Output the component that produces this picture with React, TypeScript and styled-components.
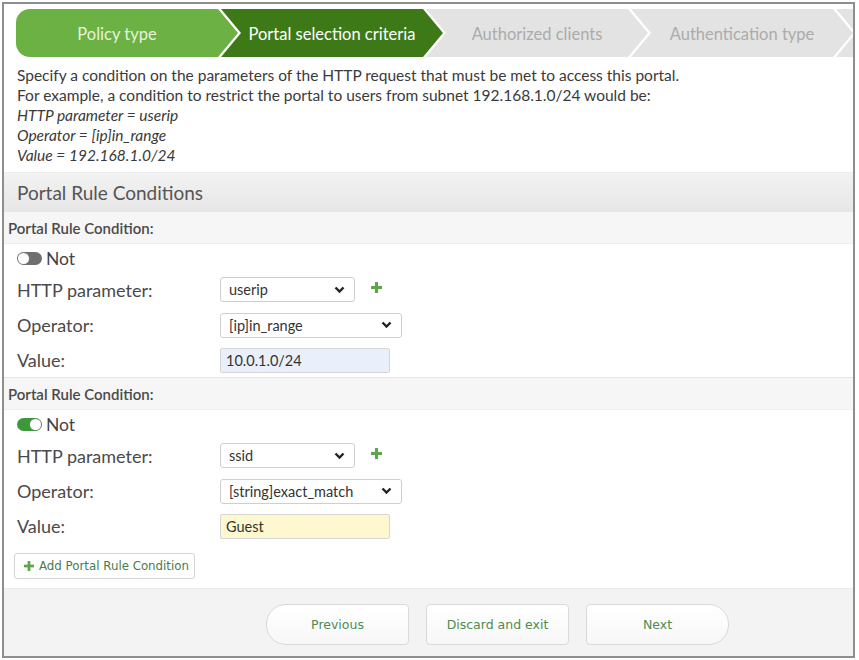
import React from "react";
import styled, { createGlobalStyle, css } from "styled-components";

const Global = createGlobalStyle`
  html, body { margin: 0; padding: 0; background: #ffffff; }
  body { font-family: Lato, "Open Sans", sans-serif; color: #333; }
  * { box-sizing: border-box; }
`;

const Frame = styled.div`
  margin: 2px 4px 0 2px;
  width: 853px;
  height: 656px;
  border: 2px solid #8e8e8e;
  display: flex;
  flex-direction: column;
  overflow: hidden;
  background: #fff;
`;

const Steps = styled.div`
  display: flex;
  padding: 5px 0 0 12px;
  height: 53px;
  overflow: hidden;
  flex-shrink: 0;
`;

type StepKind = "done" | "active" | "todo";

const Step = styled.div<{ $kind: StepKind; $first?: boolean }>`
  flex: 0 0 222px;
  height: 48px;
  display: flex;
  align-items: center;
  justify-content: center;
  font-size: 16.5px;
  padding-top: 1px;
  white-space: nowrap;
  padding-right: 20px;
  padding-left: ${(p) => (p.$first ? "0" : "20px")};
  margin-left: ${(p) => (p.$first ? "0" : "-17px")};
  clip-path: ${(p) =>
    p.$first
      ? "polygon(0 0, calc(100% - 20px) 0, 100% 50%, calc(100% - 20px) 100%, 0 100%)"
      : "polygon(0 0, calc(100% - 20px) 0, 100% 50%, calc(100% - 20px) 100%, 0 100%, 20px 50%)"};
  border-radius: ${(p) => (p.$first ? "14px 0 0 14px" : "0")};
  ${(p) =>
    p.$kind === "done" &&
    css`
      background: #6cb144;
      color: #e6f4da;
    `}
  ${(p) =>
    p.$kind === "active" &&
    css`
      background: #3d7a17;
      color: #ffffff;
    `}
  ${(p) =>
    p.$kind === "todo" &&
    css`
      background: #e3e3e3;
      color: #ababab;
    `}
`;

const Description = styled.div`
  padding: 8px 13px 0 13px;
  font-size: 15.5px;
  line-height: 20px;
  color: #3a3a3a;
  height: 115px;
  flex-shrink: 0;
  white-space: nowrap;
`;

const Italic = styled.div`
  font-style: italic;
`;

const SectionHeader = styled.div`
  height: 39px;
  display: flex;
  align-items: center;
  padding-left: 13px;
  font-size: 19px;
  color: #555;
  background: linear-gradient(#f2f2f2, #e7e7e7);
  border-top: 1px solid #ececec;
  flex-shrink: 0;
`;

const ConditionBand = styled.div`
  height: 33px;
  display: flex;
  align-items: center;
  padding-left: 4px;
  font-size: 15px;
  font-weight: 600;
  color: #4a4a4a;
  background: #f6f6f6;
  border-top: 1px solid #e6e6e6;
  border-bottom: 1px solid #eeeeee;
  flex-shrink: 0;
`;

const ToggleRow = styled.div`
  height: 28px;
  display: flex;
  align-items: center;
  gap: 4px;
  padding-left: 13px;
  font-size: 17.5px;
  color: #444;
`;

const Track = styled.span<{ $on?: boolean }>`
  position: relative;
  width: 25px;
  height: 13px;
  border-radius: 7px;
  background: ${(p) => (p.$on ? "#3a9a3a" : "#6f6f6f")};
  display: inline-block;
`;

const Knob = styled.span<{ $on?: boolean }>`
  position: absolute;
  top: 1px;
  left: ${(p) => (p.$on ? "13px" : "1px")};
  width: 11px;
  height: 11px;
  border-radius: 50%;
  background: #fff;
  box-shadow: 0 0 0 0.5px #888;
`;

const FieldRow = styled.div<{ $h?: number }>`
  height: ${(p) => p.$h ?? 35}px;
  display: grid;
  grid-template-columns: 203px max-content max-content;
  justify-content: start;
  align-items: center;
  padding-left: 13px;
`;

const Label = styled.span`
  font-size: 18px;
  color: #4a4a4a;
`;

const SelectBox = styled.div<{ $w: number }>`
  width: ${(p) => p.$w}px;
  height: 25px;
  border: 1px solid #cfcfcf;
  border-radius: 3px;
  background: #fff;
  display: flex;
  align-items: center;
  justify-content: space-between;
  padding: 0 9px 0 8px;
  font-size: 14.5px;
  color: #333;
`;

const InputBox = styled.div<{ $tone: "blue" | "yellow" }>`
  width: 170px;
  height: 25px;
  border: 1px solid #d6d6d6;
  border-radius: 2px;
  background: ${(p) => (p.$tone === "blue" ? "#e9f0fb" : "#fdf8cf")};
  display: flex;
  align-items: center;
  padding-left: 5px;
  font-size: 14.5px;
  color: #333;
`;

const PlusSlot = styled.span`
  margin-left: 16px;
  display: inline-flex;
  align-items: center;
  margin-top: -4px;
`;

const AddButton = styled.div`
  margin: 10px 0 0 10px;
  width: 181px;
  height: 26px;
  border: 1px solid #d4d4d4;
  border-radius: 3px;
  background: #fff;
  display: flex;
  align-items: center;
  gap: 5px;
  padding-left: 9px;
  font-family: "DejaVu Sans", Verdana, sans-serif;
  font-size: 11.8px;
  color: #4b7a4b;
  flex-shrink: 0;
  white-space: nowrap;
`;

const Footer = styled.div`
  margin-top: auto;
  height: 68px;
  background: #f3f3f3;
  border-top: 1px solid #e9e9e9;
  display: flex;
  align-items: flex-start;
  padding: 15px 0 0 262px;
  gap: 17px;
  flex-shrink: 0;
`;

const NavButton = styled.div<{ $shape: "left" | "mid" | "right" }>`
  width: 143px;
  height: 41px;
  border: 1px solid #d9d9d9;
  background: linear-gradient(#ffffff, #f7f7f7);
  display: flex;
  align-items: center;
  justify-content: center;
  font-family: "DejaVu Sans", Verdana, sans-serif;
  font-size: 12.5px;
  color: #4f8a4f;
  border-radius: ${(p) =>
    p.$shape === "left" ? "20px 4px 4px 20px" : p.$shape === "right" ? "4px 20px 20px 4px" : "4px"};
`;

const Chevron = () => (
  <svg width="11" height="8" viewBox="0 0 11 8">
    <polyline points="1.5,1.5 5.5,5.5 9.5,1.5" fill="none" stroke="#222" strokeWidth="2.4" />
  </svg>
);

const Plus = ({ size = 11 }: { size?: number }) => (
  <svg width={size} height={size} viewBox="0 0 11 11">
    <rect x="4" y="0" width="3" height="11" fill="#5aa84a" />
    <rect x="0" y="4" width="11" height="3" fill="#5aa84a" />
  </svg>
);

type Cond = {
  on: boolean;
  param: string;
  op: string;
  value: string;
  tone: "blue" | "yellow";
};

const conditions: Cond[] = [
  { on: false, param: "userip", op: "[ip]in_range", value: "10.0.1.0/24", tone: "blue" },
  { on: true, param: "ssid", op: "[string]exact_match", value: "Guest", tone: "yellow" },
];

const Condition = ({ c }: { c: Cond }) => (
  <>
    <ConditionBand>Portal Rule Condition:</ConditionBand>
    <ToggleRow>
      <Track $on={c.on}>
        <Knob $on={c.on} />
      </Track>
      Not
    </ToggleRow>
    <FieldRow>
      <Label>HTTP parameter:</Label>
      <SelectBox $w={135}>
        {c.param}
        <Chevron />
      </SelectBox>
      <PlusSlot>
        <Plus />
      </PlusSlot>
    </FieldRow>
    <FieldRow $h={36}>
      <Label>Operator:</Label>
      <SelectBox $w={182}>
        {c.op}
        <Chevron />
      </SelectBox>
    </FieldRow>
    <FieldRow $h={34}>
      <Label>Value:</Label>
      <InputBox $tone={c.tone}>{c.value}</InputBox>
    </FieldRow>
  </>
);

export default function App() {
  return (
    <>
      <Global />
      <Frame>
        <Steps>
          <Step $kind="done" $first>
            Policy type
          </Step>
          <Step $kind="active">Portal selection criteria</Step>
          <Step $kind="todo">Authorized clients</Step>
          <Step $kind="todo">Authentication type</Step>
          <Step $kind="todo" aria-hidden="true" />
        </Steps>
        <Description>
          <div>Specify a condition on the parameters of the HTTP request that must be met to access this portal.</div>
          <div>For example, a condition to restrict the portal to users from subnet 192.168.1.0/24 would be:</div>
          <Italic>HTTP parameter = userip</Italic>
          <Italic>Operator = [ip]in_range</Italic>
          <Italic>Value = 192.168.1.0/24</Italic>
        </Description>
        <SectionHeader>Portal Rule Conditions</SectionHeader>
        {conditions.map((c, i) => (
          <Condition key={i} c={c} />
        ))}
        <AddButton>
          <Plus size={10} />
          Add Portal Rule Condition
        </AddButton>
        <Footer>
          <NavButton $shape="left">Previous</NavButton>
          <NavButton $shape="mid">Discard and exit</NavButton>
          <NavButton $shape="right">Next</NavButton>
        </Footer>
      </Frame>
    </>
  );
}
